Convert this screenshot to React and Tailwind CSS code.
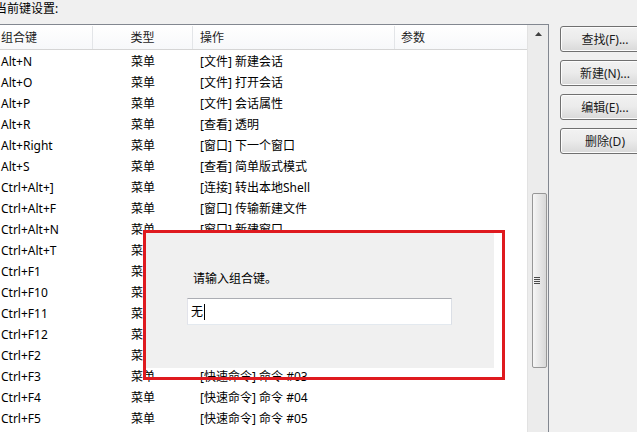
import React from 'react';

const rows = [
    ['Alt+N', '菜单', '[文件] 新建会话'],
    ['Alt+O', '菜单', '[文件] 打开会话'],
    ['Alt+P', '菜单', '[文件] 会话属性'],
    ['Alt+R', '菜单', '[查看] 透明'],
    ['Alt+Right', '菜单', '[窗口] 下一个窗口'],
    ['Alt+S', '菜单', '[查看] 简单版式模式'],
    ['Ctrl+Alt+]', '菜单', '[连接] 转出本地Shell'],
    ['Ctrl+Alt+F', '菜单', '[窗口] 传输新建文件'],
    ['Ctrl+Alt+N', '菜单', '[窗口] 新建窗口'],
    ['Ctrl+Alt+T', '菜单', '[窗口] 新建标签'],
    ['Ctrl+F1', '菜单', '[快速命令] 命令 #01'],
    ['Ctrl+F10', '菜单', '[快速命令] 命令 #10'],
    ['Ctrl+F11', '菜单', '[快速命令] 命令 #11'],
    ['Ctrl+F12', '菜单', '[快速命令] 命令 #12'],
    ['Ctrl+F2', '菜单', '[快速命令] 命令 #02'],
    ['Ctrl+F3', '菜单', '[快速命令] 命令 #03'],
    ['Ctrl+F4', '菜单', '[快速命令] 命令 #04'],
    ['Ctrl+F5', '菜单', '[快速命令] 命令 #05'],
];

const buttons = ['查找(F)...', '新建(N)...', '编辑(E)...', '删除(D)'];

function ScrollBar() {
    return (
        <div className="w-[21px] shrink-0 bg-[#ececec] border-l border-[#e2e2e2] flex flex-col items-center">
            <div className="h-[17px] w-full flex items-center justify-center">
                <svg width="7" height="4" viewBox="0 0 7 4">
                    <path d="M0 4 L3.5 0 L7 4 Z" fill="#404040" />
                </svg>
            </div>
            <div className="mt-[151px] w-[15px] h-[175px] ml-[2px] rounded-[2px] border border-[#979797] bg-gradient-to-r from-[#f6f6f6] to-[#d8d8d8] flex items-center justify-center">
                <div className="flex flex-col gap-[1px] mr-[4px]">
                    <div className="w-[6px] h-[1px] bg-[#4a4a4a]" />
                    <div className="w-[6px] h-[1px] bg-[#4a4a4a]" />
                    <div className="w-[6px] h-[1px] bg-[#4a4a4a]" />
                    <div className="w-[6px] h-[1px] bg-[#4a4a4a]" />
                </div>
            </div>
        </div>
    );
}

export default function App() {
    return (
        <div className="relative w-[637px] h-[432px] overflow-hidden bg-[#f0f0f0] text-[12px] text-black font-['Noto_Sans','Noto_Sans_CJK_SC',sans-serif] leading-none">
            <div className="h-[24px] flex items-center ml-[-5px] pb-[6px]">当前键设置:</div>

            <div className="flex items-start">
                {/* key list */}
                <div className="shrink-0 ml-[-1px] w-[550px] h-[420px] flex border-t border-l border-r border-[#828790] bg-white">
                    <div className="flex-1 flex flex-col">
                        <div className="h-[25px] pt-[1px] flex items-center border-b border-[#d5d5d5] bg-gradient-to-b from-white to-[#f7f8fa] text-[#1e1e1e]">
                            <div className="w-[93px] pl-[1px] h-full flex items-center border-r border-[#e3e5e8]">组合键</div>
                            <div className="w-[100px] h-full flex items-center justify-center border-r border-[#e3e5e8]">类型</div>
                            <div className="w-[202px] pl-[7px] h-full flex items-center border-r border-[#e3e5e8]">操作</div>
                            <div className="flex-1 pl-[6px] h-full flex items-center">参数</div>
                        </div>
                        {rows.map(([key, type, action]) => (
                            <div key={key} className="h-[21px] pt-[2px] flex items-center">
                                <div className="w-[93px] pl-[1px]">{key}</div>
                                <div className="w-[100px] text-center">{type}</div>
                                <div className="w-[202px] pl-[7px] whitespace-nowrap">{action}</div>
                                <div className="flex-1" />
                            </div>
                        ))}
                    </div>
                    <ScrollBar />
                </div>

                {/* buttons */}
                <div className="shrink-0 ml-[11px] mt-[2px] flex flex-col gap-[8px]">
                    {buttons.map(b => (
                        <button
                            key={b}
                            className="w-[90px] h-[26px] pt-[1px] rounded-[3px] border border-[#707070] bg-gradient-to-b from-[#f2f2f2] via-[#ebebeb] to-[#d9d9d9] text-[12px] text-[#1a1a1a] flex items-center justify-center shadow-[inset_0_0_0_1px_#fcfcfc]"
                        >
                            {b}
                        </button>
                    ))}
                </div>
            </div>

            {/* key input dialog */}
            <div className="absolute left-[146px] top-[233px] w-[348px] h-[135px] bg-[#f0f0f0]">
                <div className="ml-[47px] mt-[39px] h-[13px] flex items-center">请输入组合键。</div>
                <div className="ml-[41px] mt-[13px] w-[265px] h-[27px] bg-white border border-t-[#abadb3] border-l-[#e2e3ea] border-r-[#dbdfe6] border-b-[#e3e9ef] flex items-center pl-[3px]">
                    <span>无</span>
                    <span className="w-[1px] h-[16px] bg-black ml-[1px]" />
                </div>
            </div>

            {/* red annotation frame */}
            <div className="absolute left-[143px] top-[230px] w-[362px] h-[150px] border-[3px] border-[#df1a1f] pointer-events-none" />
        </div>
    );
}
